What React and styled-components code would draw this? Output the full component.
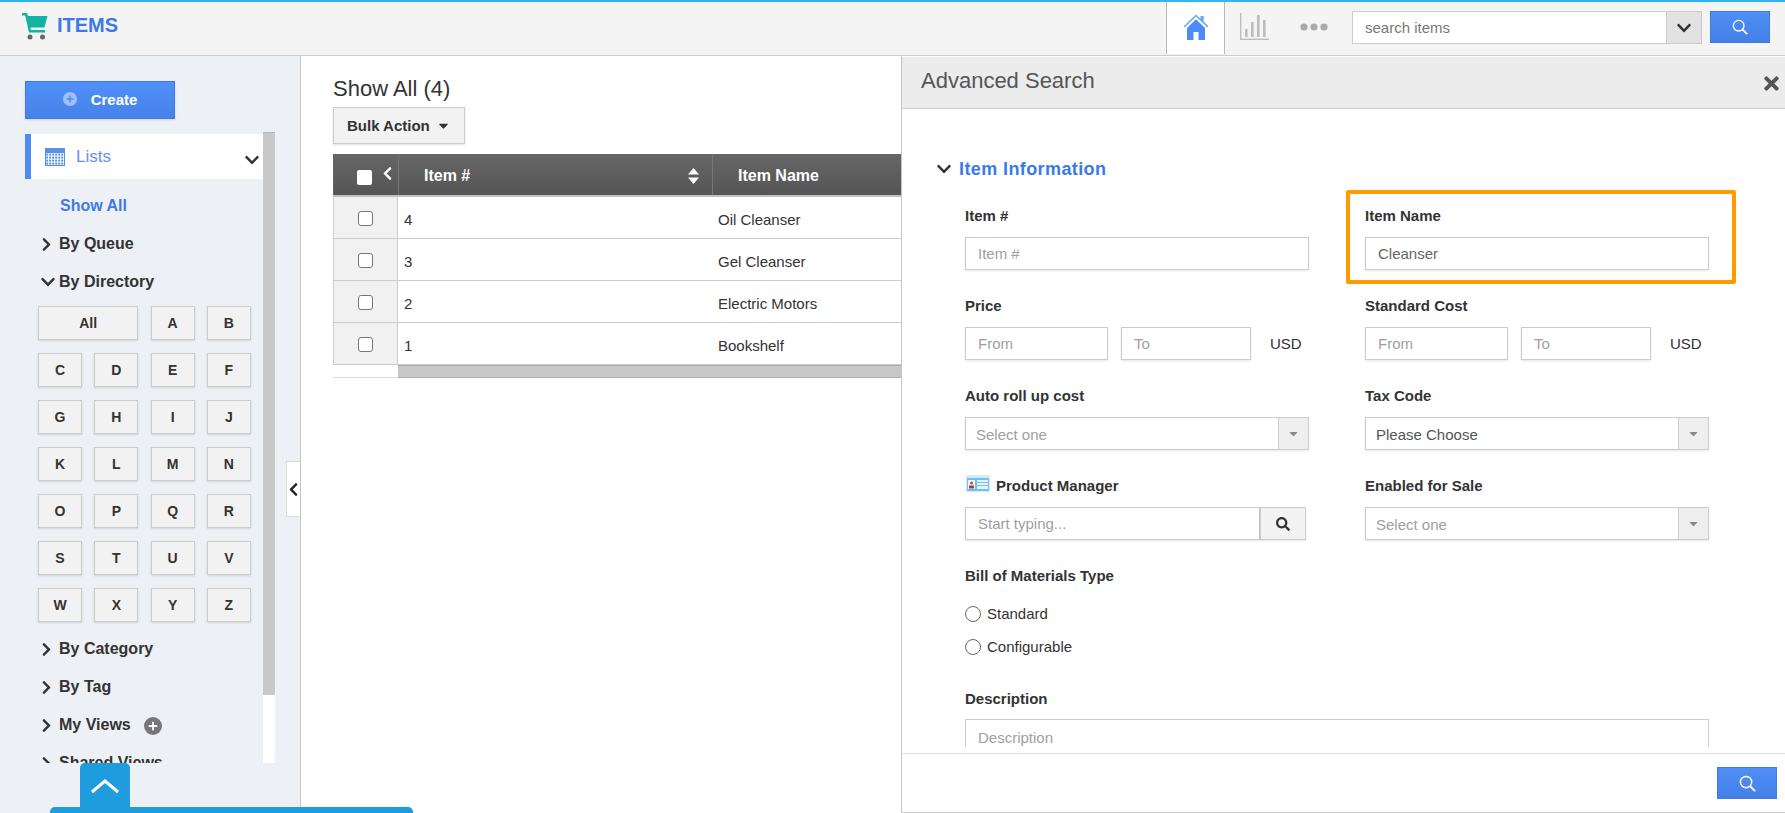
import React from "react";
import styled, { createGlobalStyle } from "styled-components";
import {
  FaChevronRight,
  FaChevronDown,
  FaChevronLeft,
  FaSearch,
  FaTimes,
  FaCaretDown,
  FaPlus,
} from "react-icons/fa";

const Global = createGlobalStyle`
  html, body { margin: 0; padding: 0; height: 813px; overflow: hidden; background: #fff; }
  body { font-family: "Liberation Sans", Arial, sans-serif; color: #333; }
  * { box-sizing: border-box; }
`;

const Page = styled.div`
  position: relative;
  width: 1785px;
  height: 813px;
  overflow: hidden;
  display: flex;
  flex-direction: column;
`;

const TopBar = styled.header`
  flex: none;
  height: 56px;
  border-top: 2px solid #2db8ef;
  border-bottom: 1px solid #ccc;
  background: #f4f4f4;
  display: flex;
  align-items: stretch;
`;

const Brand = styled.div`
  display: flex;
  align-items: center;
  gap: 8px;
  padding: 0 0 6px 21px;
  flex: 1;
`;

const BrandName = styled.span`
  font-size: 20px;
  font-weight: 700;
  color: #3a7ae8;
`;

const NavTab = styled.div`
  width: 59px;
  display: flex;
  align-items: center;
  justify-content: center;
  margin-bottom: 1px;
  padding-bottom: 3px;
  background: ${(p) => (p.$active ? "#fff" : "transparent")};
  border-left: ${(p) => (p.$active ? "1px solid #b8b8b8" : "0")};
  border-right: ${(p) => (p.$active ? "1px solid #b8b8b8" : "0")};
`;

const SearchGroup = styled.div`
  display: flex;
  align-items: flex-start;
  padding: 9px 15px 0 0;
  margin-left: 9px;
`;

const SearchBox = styled.div`
  width: 350px;
  height: 33px;
  display: flex;
  border: 1px solid #ccc;
  background: #fff;
`;

const SearchText = styled.div`
  flex: 1;
  padding-left: 12px;
  font-size: 15px;
  line-height: 31px;
  color: #777;
`;

const SearchToggle = styled.div`
  width: 35px;
  background: #e2e2e2;
  border-left: 1px solid #ccc;
  display: flex;
  align-items: center;
  justify-content: center;
  font-size: 16px;
  color: #333;
`;

const BlueButton = styled.button`
  width: ${(p) => p.$w || 60}px;
  height: 32px;
  margin-left: ${(p) => p.$ml || 0}px;
  padding: 0;
  border: 1px solid #3f7be6;
  background: linear-gradient(#4f8ff7, #4480e8);
  display: flex;
  align-items: center;
  justify-content: center;
`;

const Body = styled.div`
  flex: 1;
  min-height: 0;
  display: flex;
`;

const Sidebar = styled.aside`
  position: relative;
  flex: none;
  width: 301px;
  background: #edf0f5;
  border-right: 1px solid #c4c4c4;
  padding: 25px 0 0 25px;
`;

const CreateButton = styled.button`
  width: 150px;
  height: 38px;
  padding: 0 0 2px;
  border: 1px solid #3f7be6;
  background: linear-gradient(#5090f8, #4582ea);
  color: #fff;
  font-family: inherit;
  font-size: 15px;
  font-weight: 700;
  display: flex;
  align-items: center;
  justify-content: center;
  gap: 14px;
  box-shadow: 0 1px 2px rgba(0, 0, 0, 0.12);
`;

const PlusDot = styled.span`
  width: ${(p) => p.$size}px;
  height: ${(p) => p.$size}px;
  margin: ${(p) => p.$margin || 0};
  border-radius: 50%;
  background: ${(p) => p.$bg};
  color: ${(p) => p.$fg};
  display: inline-flex;
  align-items: center;
  justify-content: center;
  font-size: ${(p) => Math.round(p.$size * 0.58)}px;
`;

const ListArea = styled.div`
  display: flex;
  height: 631px;
  margin-top: 13px;
  width: 250px;
`;

const ListScroll = styled.div`
  width: 238px;
  overflow: hidden;
  padding-top: 2px;
`;

const ListsRow = styled.div`
  height: 45px;
  background: #fff;
  border-left: 6px solid #4d8cf7;
  display: flex;
  align-items: center;
  padding: 0 3px 0 14px;
  gap: 11px;
  color: #6a8df2;
  font-size: 17px;
`;

const ListsChevron = styled.span`
  margin-left: auto;
  color: #333;
  font-size: 16px;
  display: flex;
  padding-top: 6px;
`;

const ShowAll = styled.div`
  height: 38px;
  margin-top: 7px;
  padding-left: 35px;
  font-size: 16px;
  font-weight: 700;
  color: #3f7be6;
  line-height: 40px;
`;

const NavItem = styled.div`
  height: 38px;
  padding: 2px 0 0 16px;
  display: flex;
  align-items: center;
  font-size: 16px;
  font-weight: 700;
  color: #333;
`;

const NavIcon = styled.span`
  width: 18px;
  margin-left: ${(p) => (p.$open ? -1 : -2)}px;
  margin-right: ${(p) => (p.$open ? 1 : 2)}px;
  flex: none;
  display: flex;
  font-size: ${(p) => (p.$open ? 16 : 15)}px;
`;

const LetterGrid = styled.div`
  display: grid;
  grid-template-columns: repeat(4, 44px);
  column-gap: 12.3px;
  row-gap: 13px;
  padding: 6px 0 7px 13px;
`;

const Letter = styled.div`
  grid-column: ${(p) => (p.$wide ? "span 2" : "auto")};
  height: 34px;
  background: #f2f2f2;
  border: 1px solid #ccc;
  box-shadow: 0 1px 2px rgba(0, 0, 0, 0.12);
  font-size: 14px;
  font-weight: 700;
  color: #333;
  display: flex;
  align-items: center;
  justify-content: center;
`;

const ScrollTrack = styled.div`
  width: 12px;
  height: 631px;
  background: #fff;
`;

const ScrollThumb = styled.div`
  height: 563px;
  background: #c8c8c8;
  border-top: 1px solid #b5b5b5;
`;

const CollapseHandle = styled.div`
  position: absolute;
  right: 0;
  top: 405px;
  width: 14px;
  height: 56px;
  background: #fff;
  border: 1px solid #ddd;
  border-right: 0;
  display: flex;
  align-items: center;
  justify-content: center;
  color: #222;
  font-size: 15px;
`;

const Main = styled.main`
  flex: 1;
  min-width: 0;
  padding: 20px 0 0 32px;
`;

const PageTitle = styled.h1`
  margin: 0;
  height: 31px;
  font-size: 22px;
  font-weight: 400;
  line-height: 25px;
  color: #333;
`;

const BulkButton = styled.div`
  width: 132px;
  height: 37px;
  background: #f2f2f2;
  border: 1px solid #ccc;
  box-shadow: 0 1px 2px rgba(0, 0, 0, 0.12);
  font-size: 15px;
  font-weight: 700;
  color: #333;
  display: flex;
  align-items: center;
  padding-left: 13px;
  gap: 6px;
`;

const Table = styled.div`
  margin-top: 10px;
  width: 640px;
`;

const HeadRow = styled.div`
  display: grid;
  grid-template-columns: 65px 314px 1fr;
  height: 43px;
  background: linear-gradient(#666, #555);
  color: #fff;
  font-size: 16px;
  font-weight: 700;
  border-bottom: 2px solid #c0c0c0;
`;

const HeadCheck = styled.div`
  display: flex;
  align-items: flex-start;
  padding: 12px 0 0 23px;
  gap: 8px;
  font-size: 15px;
  border-left: 1px solid #666;
`;

const HeadBox = styled.span`
  width: 15px;
  height: 15px;
  background: #fff;
  border-radius: 2px;
  margin-top: 4px;
`;

const HeadCell = styled.div`
  display: flex;
  align-items: center;
  justify-content: space-between;
  padding: 2px 13px 0 ${(p) => p.$pad}px;
  border-left: 1px solid #777;
`;

const SortIcon = styled.svg`
  width: 11px;
  height: 16px;
  display: block;
`;

const Row = styled.div`
  display: grid;
  grid-template-columns: 65px 320px 1fr;
  height: 42px;
  border-bottom: 1px solid #ccc;
  font-size: 15px;
  color: #333;
`;

const CheckCell = styled.div`
  background: #f1f1f1;
  border-left: 1px solid #ccc;
  border-right: 1px solid #ccc;
  padding-top: 2px;
  display: flex;
  align-items: center;
  justify-content: center;
`;

const RowBox = styled.span`
  width: 15px;
  height: 15px;
  background: #fff;
  border: 1px solid #777;
  border-radius: 3px;
`;

const TextCell = styled.div`
  display: flex;
  align-items: center;
  padding: 4px 0 0 ${(p) => p.$pad}px;
`;

const TableScroll = styled.div`
  height: 13px;
  margin-left: 65px;
  background: #c8c8c8;
  border-top: 1px solid #aaa;
  border-bottom: 1px solid #aaa;
`;

const TableEnd = styled.div`
  height: 1px;
  margin-top: -1px;
  width: 65px;
  background: #ddd;
`;

const Panel = styled.section`
  position: absolute;
  left: 901px;
  top: 56px;
  width: 884px;
  height: 757px;
  background: #fff;
  border-left: 1px solid #c4c4c4;
  border-bottom: 1px solid #ccc;
  display: flex;
  flex-direction: column;
`;

const PanelHead = styled.div`
  flex: none;
  height: 52px;
  margin-top: 1px;
  background: #ececec;
  border-bottom: 1px solid #ccc;
  display: flex;
  align-items: center;
  justify-content: space-between;
  padding: 0 3px 3px 19px;
  font-size: 22px;
  color: #555;
`;

const CloseIcon = styled.span`
  display: flex;
  font-size: 21px;
  color: #555;
  padding-top: 5px;
`;

const PanelBody = styled.div`
  flex: 1;
  min-height: 0;
  overflow: hidden;
  margin-bottom: 6px;
  padding: 47px 0 0 34px;
`;

const SectionTitle = styled.div`
  display: flex;
  align-items: center;
  gap: 7px;
  height: 26px;
  font-size: 18px;
  font-weight: 700;
  letter-spacing: 0.4px;
  color: #3a7ae8;
  margin-bottom: 26px;
`;

const SectionChevron = styled.span`
  display: flex;
  font-size: 16px;
  color: #333;
`;

const Form = styled.div`
  display: grid;
  grid-template-columns: 344px 344px;
  column-gap: 56px;
  row-gap: 28px;
  padding-left: 29px;
`;

const Field = styled.div`
  position: relative;
  grid-column: ${(p) => (p.$full ? "1 / -1" : "auto")};
`;

const Label = styled.div`
  height: 16px;
  display: flex;
  align-items: center;
  gap: 6px;
  font-size: 15px;
  font-weight: 700;
  color: #333;
  line-height: 16px;
  margin-bottom: 13px;
`;

const LabelIcon = styled.span`
  display: flex;
  margin: -6px 0 0 1px;
`;

const Input = styled.div`
  width: ${(p) => p.$w || "100%"};
  height: 33px;
  flex: ${(p) => (p.$grow ? 1 : "none")};
  background: #fff;
  border: 1px solid #ccc;
  box-shadow: 0 1px 2px rgba(0, 0, 0, 0.1);
  padding-left: 12px;
  font-size: 15px;
  line-height: 31px;
  color: ${(p) => (p.$value ? "#666" : "#a0a0a0")};
`;

const Range = styled.div`
  display: flex;
  align-items: center;
  gap: 13px;
`;

const Unit = styled.span`
  font-size: 15px;
  color: #333;
  margin-left: 6px;
`;

const SelectBox = styled.div`
  height: 33px;
  background: #fff;
  border: 1px solid #ccc;
  box-shadow: 0 1px 2px rgba(0, 0, 0, 0.1);
  display: flex;
`;

const SelectText = styled.div`
  flex: 1;
  padding-left: 10px;
  font-size: 15px;
  line-height: 33px;
  color: ${(p) => (p.$value ? "#555" : "#a0a0a0")};
`;

const SelectCaret = styled.div`
  width: 30px;
  background: #eee;
  border-left: 1px solid #ccc;
  display: flex;
  align-items: center;
  justify-content: center;
  color: #888;
  font-size: 13px;
`;

const LookupRow = styled.div`
  display: flex;
  width: 341px;
`;

const LookupButton = styled.div`
  width: 46px;
  height: 33px;
  background: #f2f2f2;
  border: 1px solid #ccc;
  box-shadow: 0 1px 2px rgba(0, 0, 0, 0.1);
  display: flex;
  align-items: center;
  justify-content: center;
  font-size: 14px;
  color: #333;
`;

const RadioRow = styled.div`
  height: 33px;
  display: flex;
  align-items: center;
  gap: 6px;
  font-size: 15px;
  color: #333;
`;

const RadioDot = styled.span`
  width: 16px;
  height: 16px;
  border: 1px solid #666;
  border-radius: 50%;
  background: #fff;
`;

const TextArea = styled.div`
  width: 744px;
  height: 80px;
  margin-top: -1px;
  border: 1px solid #ccc;
  padding: 8px 12px;
  font-size: 15px;
  line-height: 20px;
  color: #a0a0a0;
`;

const Highlight = styled.div`
  position: absolute;
  left: -19px;
  top: -18px;
  width: 390px;
  height: 94px;
  border: 4px solid #ff9a00;
  border-radius: 2px;
  pointer-events: none;
`;

const PanelFoot = styled.div`
  flex: none;
  height: 59px;
  border-top: 1px solid #e2e2e2;
  background: #fff;
  display: flex;
  justify-content: flex-end;
  align-items: flex-start;
  padding: 13px 8px 0 0;
`;

const ChatTab = styled.div`
  position: absolute;
  left: 80px;
  top: 763px;
  width: 50px;
  height: 45px;
  background: #1f9cdd;
  border-radius: 5px 5px 0 0;
  display: flex;
  align-items: center;
  justify-content: center;
`;

const ChatBar = styled.div`
  position: absolute;
  left: 50px;
  top: 807px;
  width: 363px;
  height: 6px;
  background: #1f9cdd;
  border-radius: 5px 5px 0 0;
`;

const CartIcon = () => (
  <svg width="28" height="28" viewBox="0 0 28 28">
    <path d="M1 1h5l1 3h19.5l-3 11.5H9.5l.6 2.5H24v2.4H8L4.2 3.4H1z" fill="#12b3a0" />
    <circle cx="9" cy="25" r="2.5" fill="#666" />
    <circle cx="21.5" cy="25" r="2.5" fill="#666" />
  </svg>
);

const HomeIcon = () => (
  <svg width="26" height="28" viewBox="0 0 26 28">
    <path d="M0.5 13.5 13 1.5l4.5 4.2V3h3.2v5.6l4.8 4.9-1.1 1.1L13 3.6 1.6 14.6z" fill="#6aa5fa" />
    <path d="M4 15 13 6.2 22 15v12h-6.5v-8h-5v8H4z" fill="#4d8cf7" />
  </svg>
);

const ChartIcon = () => (
  <svg width="30" height="28" viewBox="0 0 30 28" fill="#bdbdbd">
    <rect x="0" y="0" width="1.4" height="27" />
    <rect x="0" y="25.6" width="29" height="1.4" />
    <rect x="5" y="16" width="2.6" height="8" />
    <rect x="11" y="9" width="2.6" height="15" />
    <rect x="17" y="2" width="2.6" height="22" />
    <rect x="23" y="7" width="2.6" height="17" />
  </svg>
);

const DotsIcon = () => (
  <svg width="28" height="8" viewBox="0 0 28 8" fill="#aaa">
    <circle cx="4" cy="4" r="3.6" />
    <circle cx="14" cy="4" r="3.6" />
    <circle cx="24" cy="4" r="3.6" />
  </svg>
);

const GlassIcon = ({ size = 18 }) => (
  <svg width={size} height={size} viewBox="0 0 18 18" fill="none" stroke="#fff" strokeWidth="1.5">
    <circle cx="7.5" cy="7.5" r="6" />
    <path d="M12 12l5 5" strokeWidth="2" />
  </svg>
);

const CalendarIcon = () => (
  <svg width="20" height="18" viewBox="0 0 20 18">
    <rect x="0" y="0" width="20" height="18" fill="#5b8fe6" />
    <rect x="1" y="5" width="18" height="12" fill="#fff" />
    <g fill="#5b8fe6">
      {[2, 5, 8, 11, 14, 17].flatMap((x) =>
        [6, 9, 12, 15].map((y) => <rect key={`${x}-${y}`} x={x - 0.8} y={y - 0.4} width="2" height="2" />)
      )}
    </g>
  </svg>
);

const ContactIcon = () => (
  <svg width="24" height="17" viewBox="0 0 24 17">
    <rect x="0" y="0" width="24" height="17" fill="#d4ebfb" />
    <rect x="1" y="3" width="22" height="13" fill="#6fc0f3" />
    <rect x="2" y="5" width="7" height="9" fill="#f4f4f4" />
    <circle cx="5.5" cy="8" r="1.6" fill="#b3584a" />
    <rect x="3" y="10.5" width="5" height="3" fill="#8c4a44" />
    <rect x="11" y="5" width="11" height="9" fill="#e6f4fd" />
    <rect x="11" y="7" width="11" height="1" fill="#6fc0f3" />
    <rect x="11" y="10" width="11" height="1" fill="#6fc0f3" />
  </svg>
);

const ChevronUpLine = () => (
  <svg width="30" height="16" viewBox="0 0 30 16" fill="none" stroke="#fff" strokeWidth="3">
    <path d="M2 14 15 3l13 11" />
  </svg>
);

const letters = "ABCDEFGHIJKLMNOPQRSTUVWXYZ".split("");
const rows = [
  ["4", "Oil Cleanser"],
  ["3", "Gel Cleanser"],
  ["2", "Electric Motors"],
  ["1", "Bookshelf"],
];

const SelectField = ({ text, value }) => (
  <SelectBox>
    <SelectText $value={value}>{text}</SelectText>
    <SelectCaret>
      <FaCaretDown />
    </SelectCaret>
  </SelectBox>
);

const PriceRange = () => (
  <Range>
    <Input $w="143px">From</Input>
    <Input $w="130px">To</Input>
    <Unit>USD</Unit>
  </Range>
);

export default function App() {
  return (
    <Page>
      <Global />
      <TopBar>
        <Brand>
          <CartIcon />
          <BrandName>ITEMS</BrandName>
        </Brand>
        <NavTab $active>
          <HomeIcon />
        </NavTab>
        <NavTab>
          <ChartIcon />
        </NavTab>
        <NavTab>
          <DotsIcon />
        </NavTab>
        <SearchGroup>
          <SearchBox>
            <SearchText>search items</SearchText>
            <SearchToggle>
              <FaChevronDown />
            </SearchToggle>
          </SearchBox>
          <BlueButton $ml={8}>
            <GlassIcon size={16} />
          </BlueButton>
        </SearchGroup>
      </TopBar>

      <Body>
        <Sidebar>
          <CreateButton>
            <PlusDot $size={14} $bg="#9dc0fb" $fg="#4d8cf7">
              <FaPlus />
            </PlusDot>
            Create
          </CreateButton>
          <ListArea>
            <ListScroll>
              <ListsRow>
                <CalendarIcon />
                Lists
                <ListsChevron>
                  <FaChevronDown />
                </ListsChevron>
              </ListsRow>
              <ShowAll>Show All</ShowAll>
              <NavItem>
                <NavIcon>
                  <FaChevronRight />
                </NavIcon>
                By Queue
              </NavItem>
              <NavItem>
                <NavIcon $open>
                  <FaChevronDown />
                </NavIcon>
                By Directory
              </NavItem>
              <LetterGrid>
                <Letter $wide>All</Letter>
                {letters.map((l) => (
                  <Letter key={l}>{l}</Letter>
                ))}
              </LetterGrid>
              <NavItem>
                <NavIcon>
                  <FaChevronRight />
                </NavIcon>
                By Category
              </NavItem>
              <NavItem>
                <NavIcon>
                  <FaChevronRight />
                </NavIcon>
                By Tag
              </NavItem>
              <NavItem>
                <NavIcon>
                  <FaChevronRight />
                </NavIcon>
                My Views
                <PlusDot $size={18} $margin="2px 0 0 13px" $bg="#777" $fg="#fff">
                  <FaPlus />
                </PlusDot>
              </NavItem>
              <NavItem>
                <NavIcon>
                  <FaChevronRight />
                </NavIcon>
                Shared Views
              </NavItem>
            </ListScroll>
            <ScrollTrack>
              <ScrollThumb />
            </ScrollTrack>
          </ListArea>
          <CollapseHandle>
            <FaChevronLeft />
          </CollapseHandle>
        </Sidebar>

        <Main>
          <PageTitle>Show All (4)</PageTitle>
          <BulkButton>
            Bulk Action
            <FaCaretDown />
          </BulkButton>
          <Table>
            <HeadRow>
              <HeadCheck>
                <HeadBox />
                <FaChevronLeft />
              </HeadCheck>
              <HeadCell $pad={25}>
                Item #
                <SortIcon viewBox="0 0 11 16" fill="#fff">
                  <path d="M5.5 0 11 6.5H0zM5.5 16 0 9.5h11z" />
                </SortIcon>
              </HeadCell>
              <HeadCell $pad={25}>Item Name</HeadCell>
            </HeadRow>
            {rows.map(([id, name]) => (
              <Row key={id}>
                <CheckCell>
                  <RowBox />
                </CheckCell>
                <TextCell $pad={6}>{id}</TextCell>
                <TextCell $pad={0}>{name}</TextCell>
              </Row>
            ))}
            <TableScroll />
            <TableEnd />
          </Table>
        </Main>
      </Body>

      <Panel>
        <PanelHead>
          Advanced Search
          <CloseIcon>
            <FaTimes />
          </CloseIcon>
        </PanelHead>
        <PanelBody>
          <SectionTitle>
            <SectionChevron>
              <FaChevronDown />
            </SectionChevron>
            Item Information
          </SectionTitle>
          <Form>
            <Field>
              <Label>Item #</Label>
              <Input>Item #</Input>
            </Field>
            <Field>
              <Highlight />
              <Label>Item Name</Label>
              <Input $value>Cleanser</Input>
            </Field>
            <Field>
              <Label>Price</Label>
              <PriceRange />
            </Field>
            <Field>
              <Label>Standard Cost</Label>
              <PriceRange />
            </Field>
            <Field>
              <Label>Auto roll up cost</Label>
              <SelectField text="Select one" />
            </Field>
            <Field>
              <Label>Tax Code</Label>
              <SelectField text="Please Choose" value />
            </Field>
            <Field>
              <Label>
                <LabelIcon>
                  <ContactIcon />
                </LabelIcon>
                Product Manager
              </Label>
              <LookupRow>
                <Input $grow $w="auto">
                  Start typing...
                </Input>
                <LookupButton>
                  <FaSearch />
                </LookupButton>
              </LookupRow>
            </Field>
            <Field>
              <Label>Enabled for Sale</Label>
              <SelectField text="Select one" />
            </Field>
            <Field $full>
              <Label>Bill of Materials Type</Label>
              <div>
                <RadioRow>
                  <RadioDot />
                  Standard
                </RadioRow>
                <RadioRow>
                  <RadioDot />
                  Configurable
                </RadioRow>
              </div>
            </Field>
            <Field $full>
              <Label>Description</Label>
              <TextArea>Description</TextArea>
            </Field>
          </Form>
        </PanelBody>
        <PanelFoot>
          <BlueButton>
            <GlassIcon size={17} />
          </BlueButton>
        </PanelFoot>
      </Panel>

      <ChatTab>
        <ChevronUpLine />
      </ChatTab>
      <ChatBar />
    </Page>
  );
}
